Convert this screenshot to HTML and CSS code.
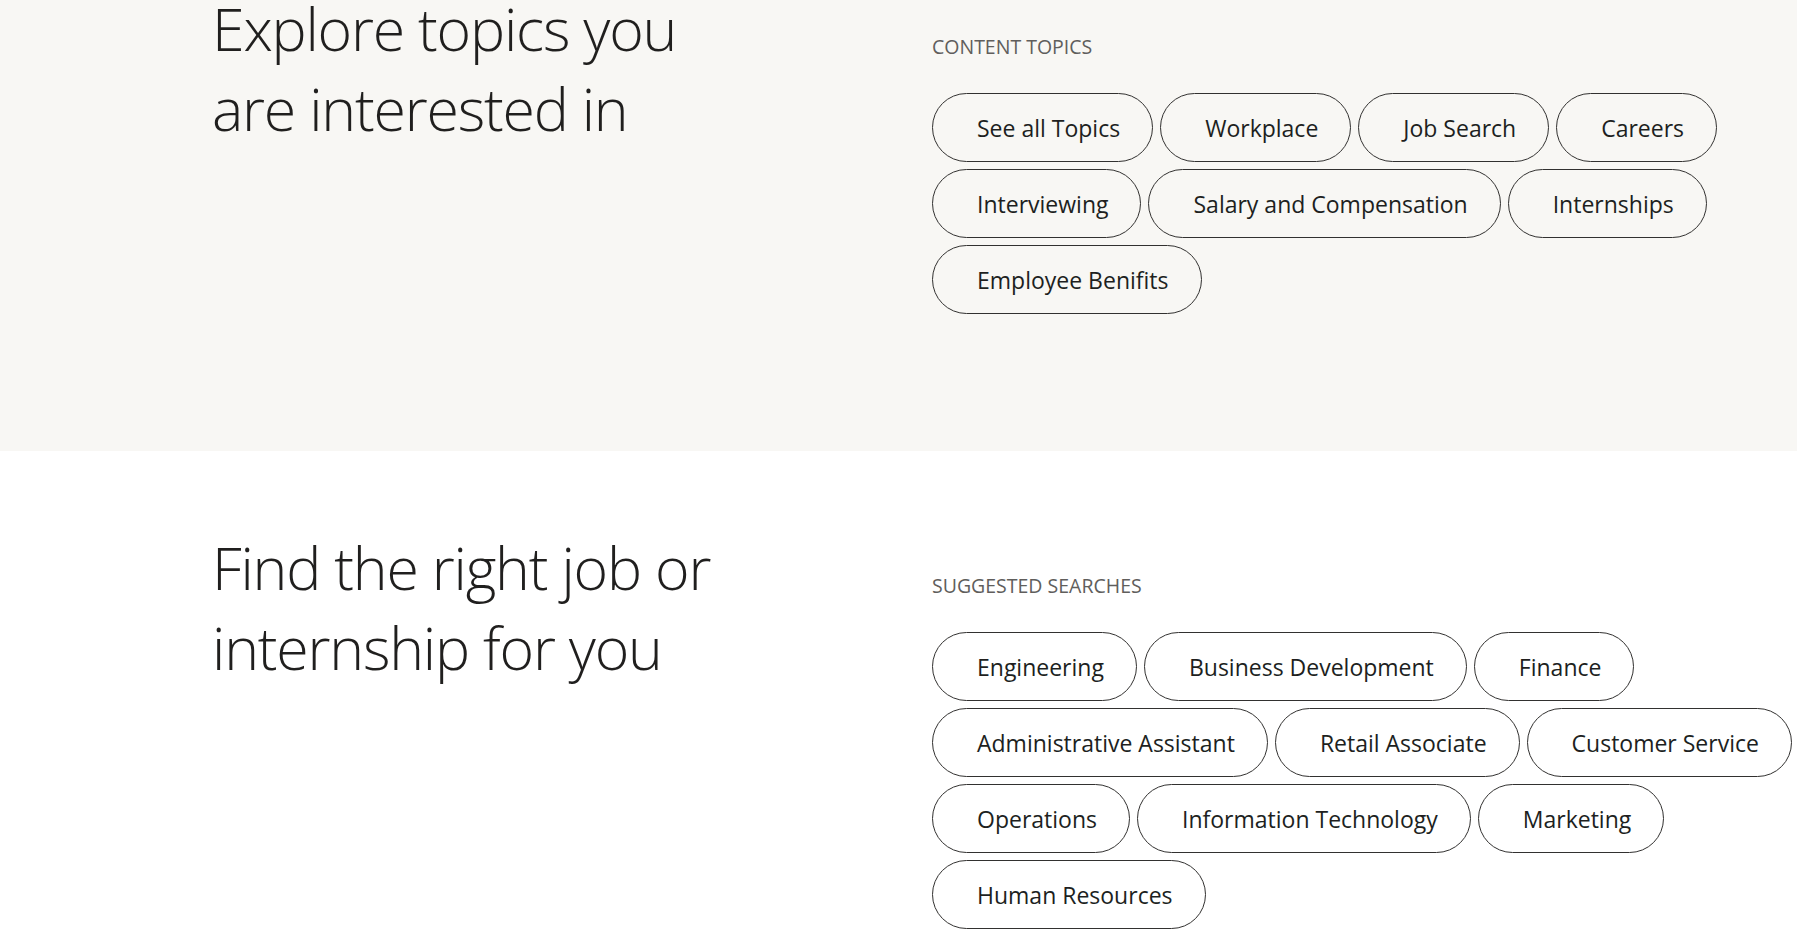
FILE: index.html
```html
<!DOCTYPE html>
<html lang="en">
<head>
<meta charset="utf-8">
<title>Explore topics</title>
<link rel="stylesheet" href="styles.css">
</head>
<body>
<main class="page">
  <section class="band band--tint">
    <h2 class="band__title">Explore topics you<br>are interested in</h2>
    <div class="band__side">
      <h3 class="band__label">CONTENT TOPICS</h3>
      <ul class="chips">
        <li><a class="chip" href="#">See all Topics</a></li>
        <li><a class="chip" href="#">Workplace</a></li>
        <li><a class="chip" href="#">Job Search</a></li>
        <li><a class="chip" href="#">Careers</a></li>
        <li><a class="chip" href="#">Interviewing</a></li>
        <li><a class="chip" href="#">Salary and Compensation</a></li>
        <li><a class="chip" href="#">Internships</a></li>
        <li><a class="chip" href="#">Employee Benifits</a></li>
      </ul>
    </div>
  </section>
  <section class="band">
    <h2 class="band__title">Find the right job or<br>internship for you</h2>
    <div class="band__side">
      <h3 class="band__label">SUGGESTED SEARCHES</h3>
      <ul class="chips">
        <li><a class="chip" href="#">Engineering</a></li>
        <li><a class="chip" href="#">Business Development</a></li>
        <li><a class="chip" href="#">Finance</a></li>
        <li><a class="chip" href="#">Administrative Assistant</a></li>
        <li><a class="chip" href="#">Retail Associate</a></li>
        <li><a class="chip" href="#">Customer Service</a></li>
        <li><a class="chip" href="#">Operations</a></li>
        <li><a class="chip" href="#">Information Technology</a></li>
        <li><a class="chip" href="#">Marketing</a></li>
        <li><a class="chip" href="#">Human Resources</a></li>
      </ul>
    </div>
  </section>
</main>
</body>
</html>
```

FILE: styles.css
```css
html {
  overflow: hidden;
}

body {
  margin: 0;
  background: #ffffff;
  color: #201f1e;
  font-family: "Open Sans", "Noto Sans", "Liberation Sans", sans-serif;
}

.page {
  margin-top: -88px;
}

.band {
  display: flex;
  padding: 75px 0 137px 212px;
  background: #ffffff;
}

.band--tint {
  background: #f8f7f4;
}

.band__title {
  flex: 0 0 720px;
  margin: 1px 0 0;
  font-size: 59px;
  font-weight: 300;
  line-height: 80px;
  letter-spacing: -1.2px;
  color: #201f1e;
}

.band__side {
  flex: 1 1 auto;
  min-width: 0;
  padding-top: 48px;
}

.band__label {
  margin: 0 0 34px;
  font-size: 19.5px;
  font-weight: 400;
  line-height: 24px;
  color: #605e5c;
  letter-spacing: 0;
}

.chips {
  display: flex;
  flex-wrap: wrap;
  gap: 7px;
  margin: 0;
  padding: 0;
  list-style: none;
}

.chip {
  display: flex;
  align-items: center;
  box-sizing: border-box;
  height: 69px;
  padding: 0 32px 0 44px;
  border: 1px solid #323130;
  border-radius: 35px;
  font-size: 23px;
  line-height: 30px;
  color: #201f1e;
  text-decoration: none;
  white-space: nowrap;
}
```
